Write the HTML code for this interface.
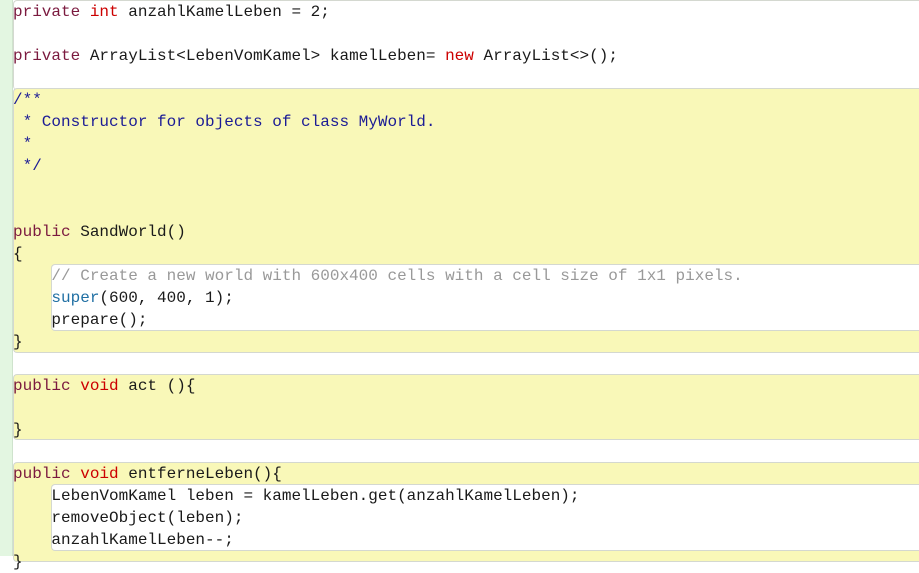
<!DOCTYPE html>
<html><head><style>
body{margin:0;width:919px;height:556px;overflow:hidden;background:#fff;position:relative}
.g{position:absolute;left:0;top:0;width:13px;height:556px;background:#e3f6e1;border-right:1px solid #cfe3cd;box-sizing:border-box}
.b{position:absolute;box-sizing:border-box;border:1px solid #d4d8d0;border-right:none}
.y{background:#f9f8b8;border-radius:4px 0 0 4px}
.w{background:#fff;border-radius:4px 0 0 4px}
pre{position:absolute;left:13px;top:1px;margin:0;font:16px/22px "Liberation Mono",monospace;color:#1a1a1a}
.k{color:#7b1a3f}.r{color:#cc0000}.c{color:#1b1b95}.lc{color:#999}.s{color:#1f6fa3}
</style></head><body>
<div class="g"></div>
<div class="b w" style="left:13px;top:0;width:906px;height:90px;border-bottom:none"></div>
<div class="b y" style="left:13px;top:88px;width:906px;height:265px"></div>
<div class="b w" style="left:51px;top:264px;width:868px;height:67px"></div>
<div class="b y" style="left:13px;top:374px;width:906px;height:66px"></div>
<div class="b y" style="left:13px;top:462px;width:906px;height:100px"></div>
<div class="b w" style="left:51px;top:484px;width:868px;height:67px"></div>
<pre><span class="k">private</span> <span class="r">int</span> anzahlKamelLeben = 2;

<span class="k">private</span> ArrayList&lt;LebenVomKamel&gt; kamelLeben= <span class="r">new</span> ArrayList&lt;&gt;();

<span class="c">/**
 * Constructor for objects of class MyWorld.
 * 
 */</span>


<span class="k">public</span> SandWorld()
{
    <span class="lc">// Create a new world with 600x400 cells with a cell size of 1x1 pixels.</span>
    <span class="s">super</span>(600, 400, 1);
    prepare();
}

<span class="k">public</span> <span class="r">void</span> act (){

}

<span class="k">public</span> <span class="r">void</span> entferneLeben(){
    LebenVomKamel leben = kamelLeben.get(anzahlKamelLeben);
    removeObject(leben);
    anzahlKamelLeben--;
}</pre>
</body></html>
